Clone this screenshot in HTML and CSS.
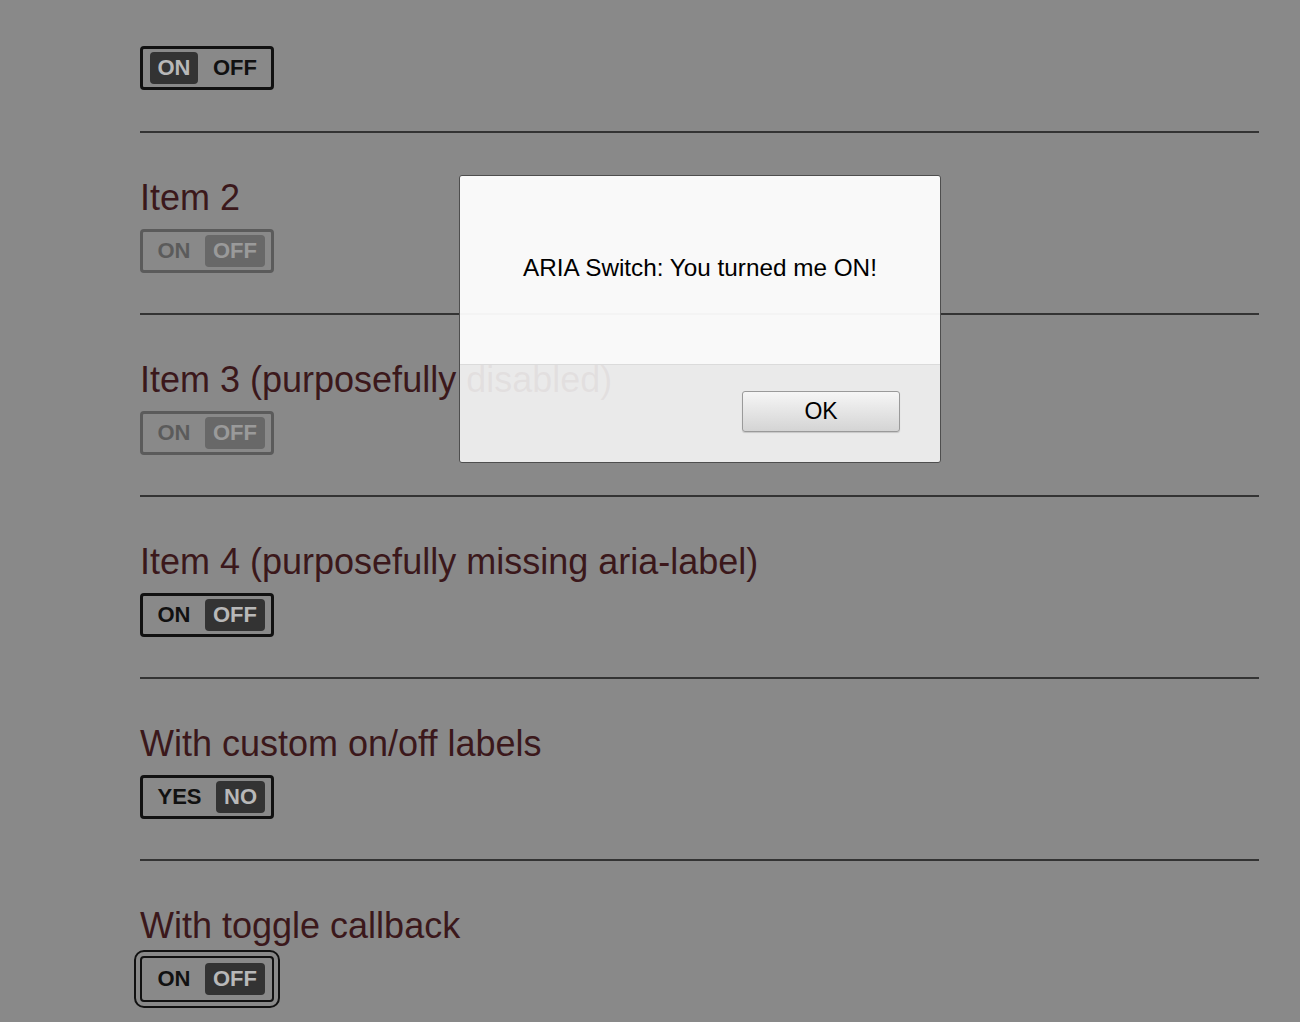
FILE: index.html
```html
<!DOCTYPE html>
<html lang="en">
<head>
<meta charset="utf-8">
<title>ARIA Switch</title>
<link rel="stylesheet" href="styles.css">
</head>
<body>
<main class="page">
  <section class="item item-first">
    <div class="switch" role="switch" aria-checked="true">
      <span class="lbl on active">ON</span>
      <span class="lbl off">OFF</span>
    </div>
  </section>
  <hr class="rule">
  <section class="item">
    <h2 class="title">Item 2</h2>
    <div class="switch disabled" role="switch" aria-checked="false">
      <span class="lbl on">ON</span>
      <span class="lbl off active">OFF</span>
    </div>
  </section>
  <hr class="rule">
  <section class="item">
    <h2 class="title">Item 3 (purposefully disabled)</h2>
    <div class="switch disabled" role="switch" aria-checked="false">
      <span class="lbl on">ON</span>
      <span class="lbl off active">OFF</span>
    </div>
  </section>
  <hr class="rule">
  <section class="item">
    <h2 class="title">Item 4 (purposefully missing aria-label)</h2>
    <div class="switch" role="switch" aria-checked="false">
      <span class="lbl on">ON</span>
      <span class="lbl off active">OFF</span>
    </div>
  </section>
  <hr class="rule">
  <section class="item">
    <h2 class="title">With custom on/off labels</h2>
    <div class="switch" role="switch" aria-checked="false">
      <span class="lbl on">YES</span>
      <span class="lbl off active">NO</span>
    </div>
  </section>
  <hr class="rule">
  <section class="item">
    <h2 class="title title-tight">With toggle callback</h2>
    <div class="switch focused" role="switch" aria-checked="false">
      <span class="lbl on">ON</span>
      <span class="lbl off active">OFF</span>
    </div>
  </section>
</main>

<div class="dialog" role="alertdialog">
  <div class="dialog-body">ARIA Switch: You turned me ON!</div>
  <div class="dialog-foot">
    <button class="ok-btn" type="button">OK</button>
  </div>
</div>
</body>
</html>
```

FILE: styles.css
```css
html, body {
  margin: 0;
  padding: 0;
}
body {
  background: #898989;
  font-family: "Liberation Sans", Arial, Helvetica, sans-serif;
  height: 1022px;
  overflow: hidden;
  position: relative;
}
.page {
  padding: 46px 0 0 140px;
  width: 1119px;
}
.item {
  padding: 45px 0 40px;
}
.item-first {
  padding-top: 0;
  padding-bottom: 41px;
}
.title {
  margin: 0 0 11px;
  font-size: 36px;
  line-height: 40px;
  font-weight: normal;
  color: #3b181b;
}
.title-tight {
  margin-bottom: 10px;
}
.rule {
  margin: 0;
  border: 0;
  height: 2px;
  background: #333333;
}

.switch {
  box-sizing: border-box;
  width: 134px;
  height: 44px;
  border: 3px solid #111111;
  border-radius: 4px;
  padding: 3px 6px 3px 7px;
  display: flex;
  gap: 7px;
  font-weight: bold;
  font-size: 22px;
  text-transform: uppercase;
}
.lbl {
  display: flex;
  align-items: center;
  justify-content: center;
  border-radius: 4px;
  color: #111111;
  line-height: 1;
}
.lbl.on {
  flex: 1;
}
.lbl.off {
  padding: 0 8px;
}
.lbl.active {
  background: #333333;
  color: #b8b8b8;
}
.switch.disabled {
  opacity: 0.38;
}
.switch.focused {
  border-width: 2px;
  height: 46px;
  padding: 5px 7px 5px 8px;
  outline: 2px solid #111111;
  outline-offset: 4px;
}

.dialog {
  position: absolute;
  left: 459px;
  top: 175px;
  width: 482px;
  height: 288px;
  box-sizing: border-box;
  border: 1px solid #4e4e4e;
  border-radius: 3px;
  overflow: hidden;
  display: flex;
  flex-direction: column;
  font-family: "Liberation Sans", Arial, Helvetica, sans-serif;
}
.dialog-body {
  height: 189px;
  display: flex;
  align-items: center;
  justify-content: center;
  padding-bottom: 4px;
  box-sizing: border-box;
  background: rgba(255, 255, 255, 0.95);
  border-bottom: 1px solid rgba(215, 215, 215, 0.9);
  font-size: 24.3px;
  color: #000000;
}
.dialog-foot {
  flex: 1;
  display: flex;
  align-items: center;
  justify-content: flex-end;
  padding: 0 40px 4px 0;
  background: rgba(245, 245, 245, 0.9);
}
.ok-btn {
  width: 158px;
  height: 41px;
  border: 1px solid #9a9a9a;
  border-radius: 3px;
  background: linear-gradient(#f6f6f6, #d4d4d4);
  box-shadow: 0 1px 1px rgba(0, 0, 0, 0.15);
  font-family: "Liberation Sans", Arial, Helvetica, sans-serif;
  font-size: 23px;
  color: #000000;
  padding: 0;
}
```
